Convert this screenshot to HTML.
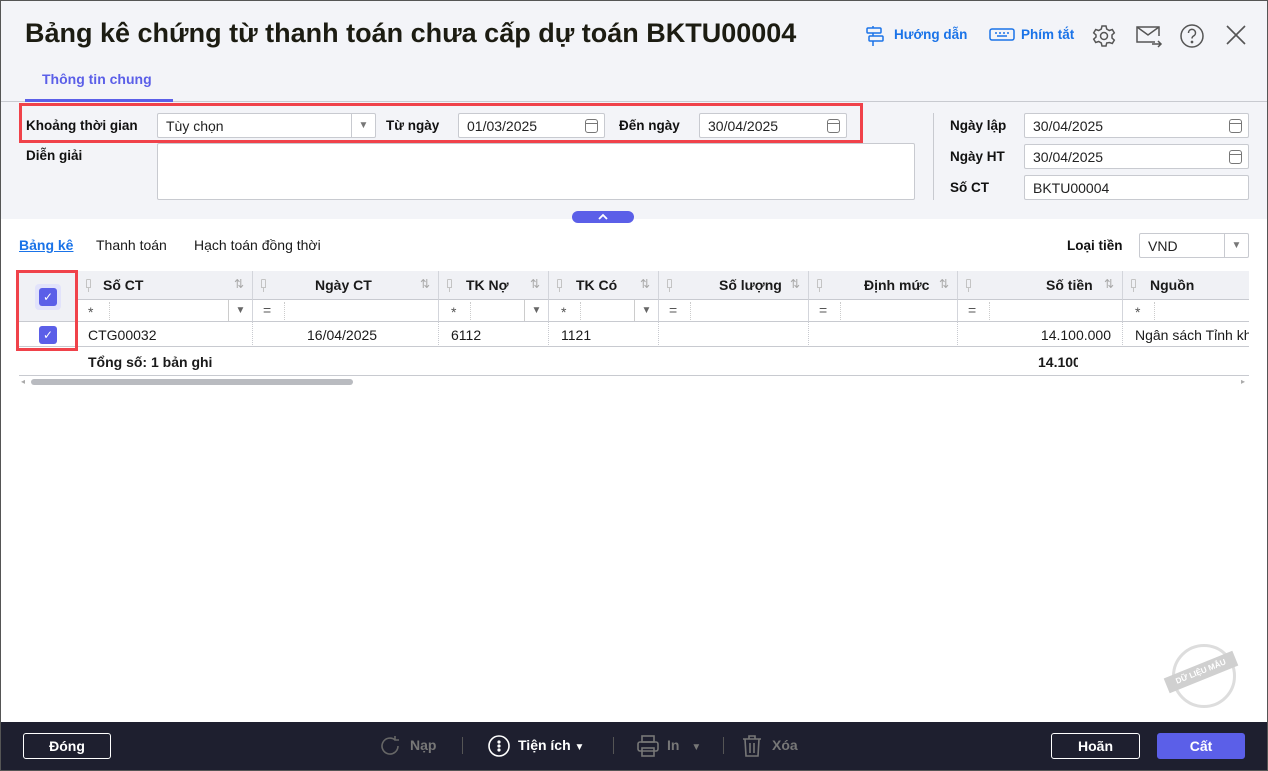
<!DOCTYPE html>
<html><head><meta charset="utf-8"><style>
*{box-sizing:border-box;margin:0;padding:0}
body{width:1268px;height:771px;overflow:hidden;font-family:"Liberation Sans",sans-serif;font-size:14px;color:#1a1a1a;background:#fff;position:relative}
.a{position:absolute}
.lbl{position:absolute;font-weight:bold;font-size:13.5px;color:#111}
.inp{position:absolute;background:#fff;border:1px solid #c8cad0;border-radius:2px;height:25px;font-size:14px;padding:4px 0 0 8px;color:#222}
.cal{position:absolute;right:6px;top:5px;width:13px;height:14px;border:1.3px solid #777;border-radius:3px}
.cal:before{content:"";position:absolute;left:0;right:0;top:3px;border-top:1.3px solid #777}
.hd{position:absolute;top:271px;height:28px;background:#f0f1f5;border-right:1px solid #d3d5db;font-weight:bold;font-size:14px;padding-top:6px}
.fl{position:absolute;top:299px;height:23px;border-right:1px solid #d3d5db;border-top:1px solid #c8cad0;border-bottom:1px solid #c8cad0;font-size:14px;color:#555}
.dt{position:absolute;top:322px;height:25px;border-right:1px dotted #c8cad0;font-size:14px;padding-top:5px;border-bottom:1px solid #c8cad0}
.pin{position:absolute;left:8px;top:8px;width:5px;height:9px;border:1px solid #c4c4c4;border-radius:1px 1px 0 0}
.pin:after{content:"";position:absolute;left:1px;top:8px;width:1px;height:4px;background:#c4c4c4}
.srt{position:absolute;right:8px;top:6px;color:#aaa;font-size:12px;font-weight:normal}
.cb{position:absolute;width:18px;height:18px;background:#5b5fe8;border-radius:3px;color:#fff;font-size:12px;text-align:center;line-height:18px}
.btn{position:absolute;top:733px;height:26px;border:1px solid #fff;border-radius:3px;color:#fff;font-weight:bold;font-size:14px;text-align:center;line-height:24px}
.ft{position:absolute;top:737px;color:#fff;font-weight:bold;font-size:14px}
</style></head><body>
<div class="a" style="left:0;top:0;width:1268px;height:219px;background:#f3f4f8;border:1px solid #555;border-bottom:none"></div>
<div class="a" style="left:0;top:0;width:1268px;height:771px;border:1px solid #555;z-index:5;pointer-events:none"></div>
<div class="a" style="left:25px;top:18px;font-size:27px;font-weight:bold;color:#1c1c12">Bảng kê chứng từ thanh toán chưa cấp dự toán BKTU00004</div>
<svg class="a" style="left:864px;top:25px" width="22" height="22" viewBox="0 0 22 22" fill="none" stroke="#1a73e8" stroke-width="1.5"><rect x="3" y="3" width="14" height="5" rx="1"/><rect x="5" y="11" width="14" height="5" rx="1"/><path d="M9 1v2M9 8v3M9 16v5"/></svg>
<div class="a" style="left:894px;top:27px;color:#1a73e8;font-weight:bold;font-size:13.5px">Hướng dẫn</div>
<svg class="a" style="left:989px;top:28px" width="26" height="14" viewBox="0 0 26 14" fill="none" stroke="#1a73e8" stroke-width="1.5"><rect x="1" y="1" width="24" height="11" rx="2"/><path d="M6 5h2M10 5h2M14 5h2M18 5h2M8 8h10"/></svg>
<div class="a" style="left:1021px;top:27px;color:#1a73e8;font-weight:bold;font-size:13.5px">Phím tắt</div>
<svg class="a" style="left:1092px;top:24px" width="24" height="24" viewBox="0 0 24 24" fill="none" stroke="#555" stroke-width="1.5"><circle cx="12" cy="12" r="3.5"/><path d="M10 2h4l.7 3 2.6 1.5 3-1 2 3.4-2.3 2.1v3l2.3 2.1-2 3.4-3-1L14.7 19 14 22h-4l-.7-3-2.6-1.5-3 1-2-3.4L4 13V11L1.7 8.9l2-3.4 3 1L9.3 5z"/></svg>
<svg class="a" style="left:1135px;top:24px" width="28" height="24" viewBox="0 0 28 24" fill="none" stroke="#555" stroke-width="1.5"><path d="M20 18H2V3h22v9"/><path d="M2 3l11 8 11-8"/><path d="M17 20h9M23 17l3 3-3 3"/></svg>
<svg class="a" style="left:1179px;top:23px" width="26" height="26" viewBox="0 0 26 26" fill="none" stroke="#555" stroke-width="1.5"><circle cx="13" cy="13" r="11"/><path d="M9.5 10a3.5 3.5 0 1 1 5 3c-1 .6-1.5 1.2-1.5 2.5"/><circle cx="13" cy="19" r=".6" fill="#555"/></svg>
<svg class="a" style="left:1225px;top:24px" width="22" height="22" viewBox="0 0 22 22" stroke="#555" stroke-width="1.6"><path d="M2 2l18 18M20 2L2 20"/></svg>
<div class="a" style="left:42px;top:71px;color:#5b5fe8;font-weight:bold;font-size:14px">Thông tin chung</div>
<div class="a" style="left:0;top:101px;width:1268px;height:1px;background:#c8cad0"></div>
<div class="a" style="left:25px;top:99px;width:148px;height:3px;background:#5b5fe8"></div>
<div class="a" style="left:19px;top:103px;width:844px;height:40px;border:3px solid #f0424a"></div>
<div class="lbl" style="left:26px;top:118px">Khoảng thời gian</div>
<div class="inp" style="left:157px;top:113px;width:219px">Tùy chọn<div class="a" style="right:0;top:0;width:24px;height:23px;border-left:1px solid #c8cad0;color:#777;font-size:10px;text-align:center;line-height:23px">▼</div></div>
<div class="lbl" style="left:386px;top:118px">Từ ngày</div>
<div class="inp" style="left:458px;top:113px;width:147px">01/03/2025<div class="cal"></div></div>
<div class="lbl" style="left:619px;top:118px">Đến ngày</div>
<div class="inp" style="left:699px;top:113px;width:148px">30/04/2025<div class="cal"></div></div>
<div class="lbl" style="left:26px;top:148px">Diễn giải</div>
<div class="inp" style="left:157px;top:143px;width:758px;height:57px"></div>
<div class="a" style="left:933px;top:113px;width:1px;height:87px;background:#c8cad0"></div>
<div class="lbl" style="left:950px;top:118px">Ngày lập</div>
<div class="inp" style="left:1024px;top:113px;width:225px">30/04/2025<div class="cal"></div></div>
<div class="lbl" style="left:950px;top:149px">Ngày HT</div>
<div class="inp" style="left:1024px;top:144px;width:225px">30/04/2025<div class="cal"></div></div>
<div class="lbl" style="left:950px;top:180px">Số CT</div>
<div class="inp" style="left:1024px;top:175px;width:225px">BKTU00004</div>
<div class="a" style="left:572px;top:211px;width:62px;height:12px;background:#5b5fe8;border-radius:6px"><svg class="a" style="left:25px;top:2px" width="12" height="8" viewBox="0 0 12 8" fill="none" stroke="#fff" stroke-width="1.8"><path d="M2 6l4-4 4 4"/></svg></div>
<div class="a" style="left:19px;top:237px;color:#1a73e8;text-decoration:underline;font-weight:bold">Bảng kê</div>
<div class="a" style="left:96px;top:237px">Thanh toán</div>
<div class="a" style="left:194px;top:237px">Hạch toán đồng thời</div>
<div class="lbl" style="left:1067px;top:238px">Loại tiền</div>
<div class="inp" style="left:1139px;top:233px;width:110px;height:25px">VND<div class="a" style="right:0;top:0;width:24px;height:23px;border-left:1px solid #c8cad0;color:#777;font-size:10px;text-align:center;line-height:23px">▼</div></div>
<div class="hd" style="left:19px;width:59px"></div>
<div class="a" style="left:19px;top:299px;width:59px;height:23px;background:#f0f1f5;border-right:1px solid #d3d5db;border-bottom:1px solid #c8cad0"></div>
<div class="a" style="left:35px;top:284px;width:26px;height:26px;background:#e2e3fb;border-radius:4px"></div>
<div class="cb" style="left:39px;top:288px">✓</div>
<div class="a" style="left:19px;top:322px;width:59px;height:25px;border-right:1px solid #d3d5db;border-bottom:1px solid #c8cad0"></div>
<div class="cb" style="left:39px;top:326px">✓</div>
<div class="a" style="left:16px;top:270px;width:62px;height:81px;border:3px solid #f0424a;z-index:3"></div>
<div class="hd" style="left:78px;width:175px;padding-left:25px"><i class="pin"></i>Số CT<span class="srt">⇅</span></div>
<div class="hd" style="left:253px;width:186px;padding-left:62px"><i class="pin"></i>Ngày CT<span class="srt">⇅</span></div>
<div class="hd" style="left:439px;width:110px;padding-left:27px"><i class="pin"></i>TK Nợ<span class="srt">⇅</span></div>
<div class="hd" style="left:549px;width:110px;padding-left:27px"><i class="pin"></i>TK Có<span class="srt">⇅</span></div>
<div class="hd" style="left:659px;width:150px;padding-left:60px"><i class="pin"></i>Số lượng<span class="srt">⇅</span></div>
<div class="hd" style="left:809px;width:149px;padding-left:55px"><i class="pin"></i>Định mức<span class="srt">⇅</span></div>
<div class="hd" style="left:958px;width:165px;padding-left:88px"><i class="pin"></i>Số tiền<span class="srt">⇅</span></div>
<div class="hd" style="left:1123px;width:126px;padding-left:27px;border-right:none"><i class="pin"></i>Nguồn</div>
<div class="fl" style="left:78px;width:175px"><span class="a" style="left:10px;top:4px">*</span><span class="a" style="left:31px;top:2px;height:18px;border-left:1px dotted #ccc"></span><span class="a" style="left:150px;top:0;height:21px;width:24px;border-left:1px solid #ccc;font-size:10px;text-align:center;line-height:22px;color:#666">▼</span></div>
<div class="fl" style="left:253px;width:186px"><span class="a" style="left:10px;top:2px">=</span><span class="a" style="left:31px;top:2px;height:18px;border-left:1px dotted #ccc"></span></div>
<div class="fl" style="left:439px;width:110px"><span class="a" style="left:12px;top:4px">*</span><span class="a" style="left:31px;top:2px;height:18px;border-left:1px dotted #ccc"></span><span class="a" style="left:85px;top:0;height:21px;width:24px;border-left:1px solid #ccc;font-size:10px;text-align:center;line-height:22px;color:#666">▼</span></div>
<div class="fl" style="left:549px;width:110px"><span class="a" style="left:12px;top:4px">*</span><span class="a" style="left:31px;top:2px;height:18px;border-left:1px dotted #ccc"></span><span class="a" style="left:85px;top:0;height:21px;width:24px;border-left:1px solid #ccc;font-size:10px;text-align:center;line-height:22px;color:#666">▼</span></div>
<div class="fl" style="left:659px;width:150px"><span class="a" style="left:10px;top:2px">=</span><span class="a" style="left:31px;top:2px;height:18px;border-left:1px dotted #ccc"></span></div>
<div class="fl" style="left:809px;width:149px"><span class="a" style="left:10px;top:2px">=</span><span class="a" style="left:31px;top:2px;height:18px;border-left:1px dotted #ccc"></span></div>
<div class="fl" style="left:958px;width:165px"><span class="a" style="left:10px;top:2px">=</span><span class="a" style="left:31px;top:2px;height:18px;border-left:1px dotted #ccc"></span></div>
<div class="fl" style="left:1123px;width:126px;border-right:none"><span class="a" style="left:12px;top:4px">*</span><span class="a" style="left:31px;top:2px;height:18px;border-left:1px dotted #ccc"></span></div>
<div class="dt" style="left:78px;width:175px;padding-left:10px">CTG00032</div>
<div class="dt" style="left:253px;width:186px;padding-left:54px">16/04/2025</div>
<div class="dt" style="left:439px;width:110px;padding-left:12px">6112</div>
<div class="dt" style="left:549px;width:110px;padding-left:12px">1121</div>
<div class="dt" style="left:659px;width:150px"></div>
<div class="dt" style="left:809px;width:149px"></div>
<div class="dt" style="left:958px;width:165px;text-align:right;padding-right:11px">14.100.000</div>
<div class="dt" style="left:1123px;width:126px;padding-left:12px;border-right:none;white-space:nowrap;overflow:hidden">Ngân sách Tỉnh khác</div>
<div class="a" style="left:88px;top:354px;font-weight:bold">Tổng số: 1 bản ghi</div>
<div class="a" style="left:1038px;top:354px;font-weight:bold;width:40px;overflow:hidden;white-space:nowrap">14.100.000</div>
<div class="a" style="left:19px;top:375px;width:1230px;height:1px;background:#c8cad0"></div>
<div class="a" style="left:31px;top:379px;width:322px;height:6px;background:#b9bbc0;border-radius:3px"></div>
<div class="a" style="left:21px;top:377px;font-size:8px;color:#aaa">◂</div>
<div class="a" style="left:1241px;top:377px;font-size:8px;color:#aaa">▸</div>
<div class="a" style="left:1172px;top:644px;width:64px;height:64px;border:3px solid #ddd;border-radius:50%"></div>
<div class="a" style="left:1164px;top:664px;width:74px;height:16px;background:#d0d0d0;color:#fff;font-size:8px;font-weight:bold;text-align:center;line-height:16px;transform:rotate(-22deg)">DỮ LIỆU MẪU</div>
<div class="a" style="left:0;top:722px;width:1268px;height:49px;background:#1e1f2f"></div>
<div class="btn" style="left:23px;width:88px">Đóng</div>
<svg class="a" style="left:378px;top:734px" width="24" height="24" viewBox="0 0 24 24" fill="none" stroke="#666" stroke-width="1.6"><path d="M20 12a8 8 0 1 1-3-6.2M17 2v4h4"/></svg>
<div class="ft" style="left:410px;color:#777">Nạp</div>
<div class="a" style="left:462px;top:737px;width:1px;height:17px;background:#555"></div>
<svg class="a" style="left:487px;top:734px" width="24" height="24" viewBox="0 0 24 24" fill="none" stroke="#fff" stroke-width="1.6"><circle cx="12" cy="12" r="10"/><circle cx="12" cy="8" r=".8" fill="#fff"/><circle cx="12" cy="12" r=".8" fill="#fff"/><circle cx="12" cy="16" r=".8" fill="#fff"/></svg>
<div class="ft" style="left:518px">Tiện ích <span style="font-size:10px">▼</span></div>
<div class="a" style="left:613px;top:737px;width:1px;height:17px;background:#555"></div>
<svg class="a" style="left:635px;top:734px" width="26" height="24" viewBox="0 0 26 24" fill="none" stroke="#777" stroke-width="1.6"><rect x="7" y="2" width="12" height="6"/><rect x="3" y="8" width="20" height="9" rx="2"/><rect x="7" y="14" width="12" height="8"/></svg>
<div class="ft" style="left:667px;color:#777">In <span style="font-size:10px;margin-left:8px">▼</span></div>
<div class="a" style="left:723px;top:737px;width:1px;height:17px;background:#555"></div>
<svg class="a" style="left:740px;top:734px" width="24" height="24" viewBox="0 0 24 24" fill="none" stroke="#777" stroke-width="1.6"><path d="M3 5h18M9 5V2h6v3M5 5l1 17h12l1-17M10 9v10M14 9v10"/></svg>
<div class="ft" style="left:772px;color:#777">Xóa</div>
<div class="btn" style="left:1051px;width:89px">Hoãn</div>
<div class="btn" style="left:1157px;width:88px;background:#5b5fe8;border-color:#5b5fe8">Cất</div>
</body></html>
